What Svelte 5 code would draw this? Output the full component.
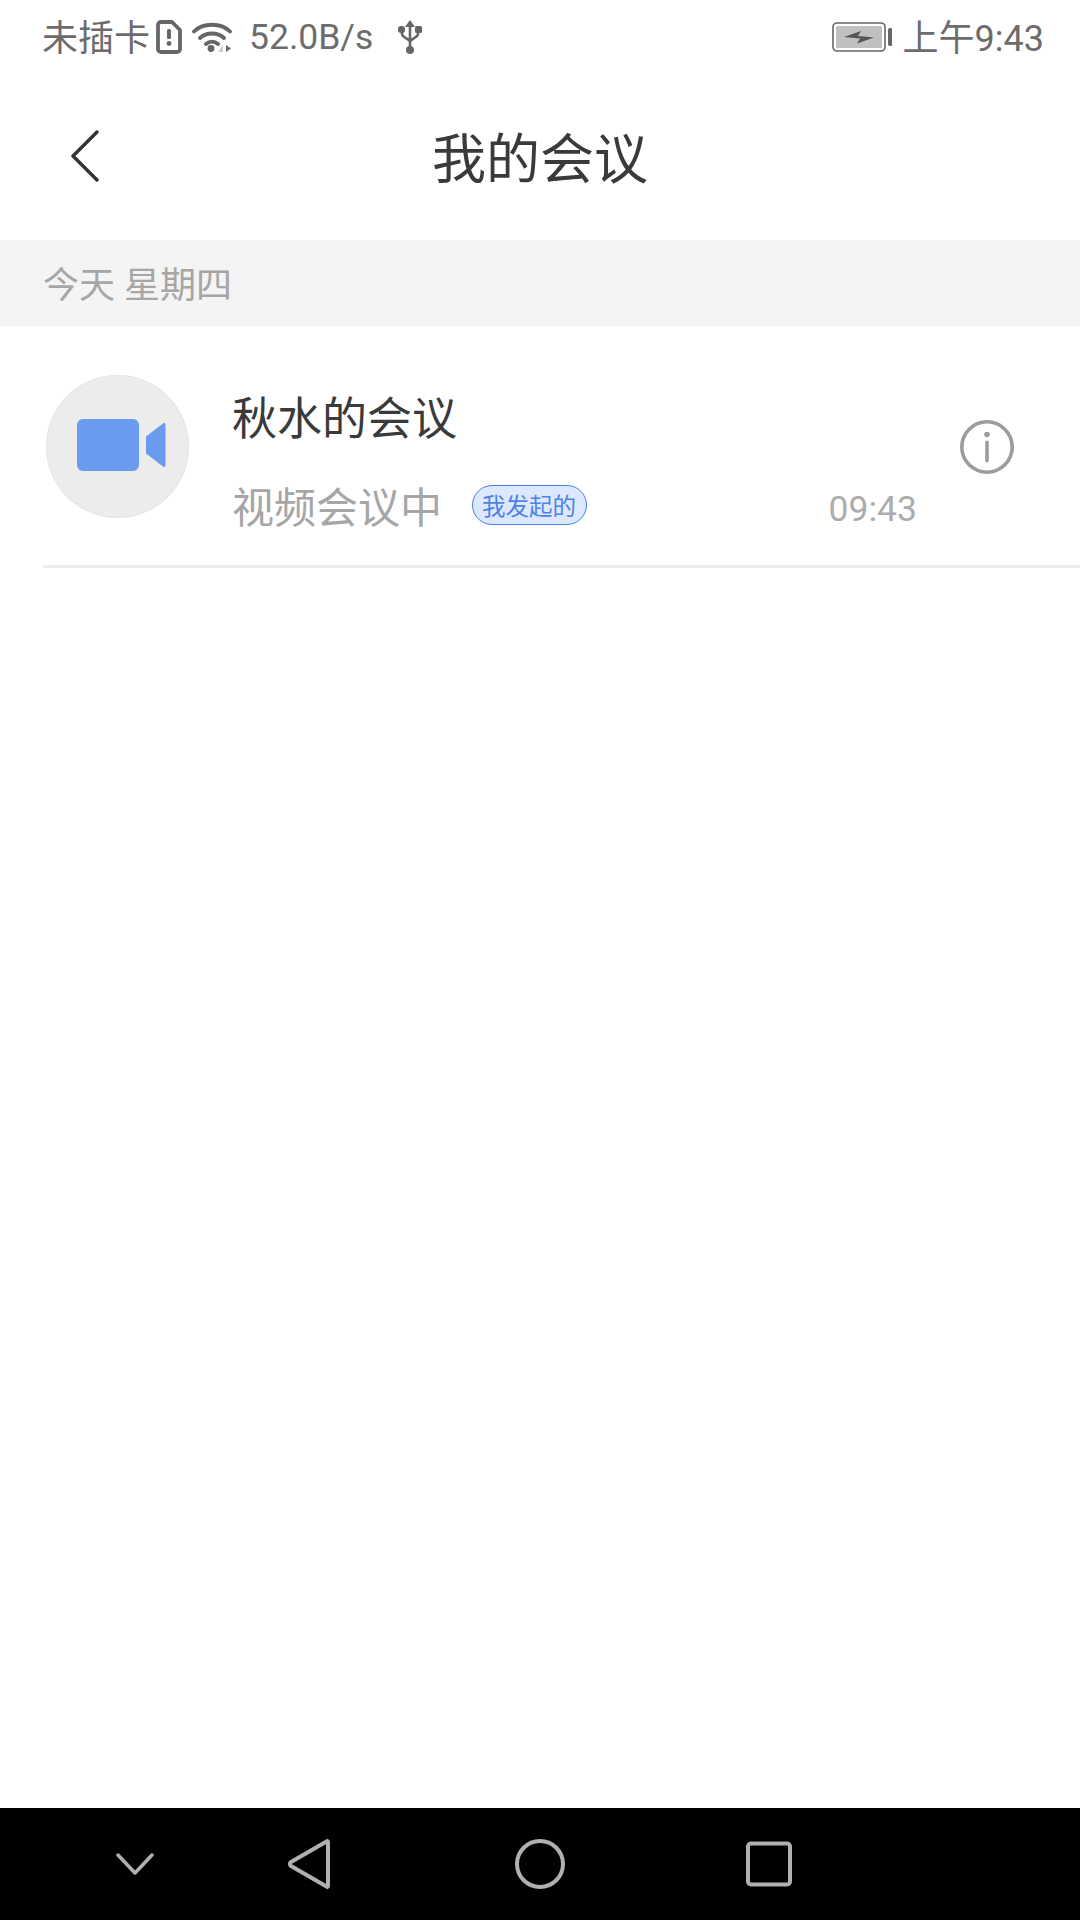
<script>
  let meeting = { title: '秋水的会议', status: '视频会议中', tag: '我发起的', time: '09:43' }
</script>

<div class="page" lang="zh-CN">
  <div class="status">
    <span class="carrier">未插卡</span>
    <svg class="sim" width="26" height="34" viewBox="0 0 26 34">
      <path d="M5 2h11l8 8v19a3 3 0 0 1-3 3H5a3 3 0 0 1-3-3V5a3 3 0 0 1 3-3z" fill="none" stroke="#666" stroke-width="3.8" stroke-linejoin="round" />
      <rect x="11" y="9" width="4" height="10" rx="1.500" fill="#666" />
      <circle cx="13" cy="23.500" r="2.400" fill="#666" />
    </svg>
    <svg class="wifi" width="42" height="32" viewBox="0 0 42 32">
      <path d="M2 10.500C11 1.500 29 1.500 38 10.500M8 17C14.500 11 25.500 11 32 17M14 23C17.500 20 22.500 20 26 23" fill="none" stroke="#666" stroke-width="3.8" stroke-linecap="round" />
      <circle cx="19" cy="27.500" r="3.400" fill="#666" />
      <path d="M31 24v7h-5z" fill="#ccc" />
      <path d="M34 24v7l5-3.500z" fill="#666" />
    </svg>
    <span class="speed">52.0B/s</span>
    <svg class="usb" width="24" height="34" viewBox="0 0 24 34">
      <path d="M12 0l5 7H7z" fill="#666" />
      <path d="M12 5v25M4 10v4c0 3.500 8 5 8 8M20 10v4c0 3.500-8 5-8 8" fill="none" stroke="#666" stroke-width="2.600" />
      <rect x="0" y="6" width="7" height="7" rx="3" fill="#666" />
      <rect x="17" y="6" width="7" height="7" rx="1.500" fill="#666" />
      <circle cx="12" cy="30" r="4" fill="#666" />
    </svg>
    <svg class="battery" width="60" height="30" viewBox="0 0 60 30">
      <rect x="1" y="1" width="52" height="28" rx="4" fill="#fff" stroke="#666" stroke-width="1.600" />
      <rect x="4" y="4" width="46" height="22" rx="1.500" fill="#c0c0c0" />
      <path d="M12 15l17-6-3 5 16 1.500-17 6 3-5z" fill="#555" />
      <rect x="56" y="6" width="4.500" height="18" rx="2" fill="#666" />
    </svg>
    <span class="clock">上午9:43</span>
  </div>

  <header>
    <svg class="back" width="30" height="52" viewBox="0 0 30 52">
      <path d="M27 2L3 26l24 24" fill="none" stroke="#333" stroke-width="3.400" stroke-linecap="round" stroke-linejoin="round" />
    </svg>
    <h1>我的会议</h1>
  </header>

  <div class="section">今天 星期四</div>

  <div class="row">
    <div class="avatar">
      <svg width="90" height="54" viewBox="0 0 90 54">
        <rect x="0" y="1" width="62" height="52" rx="6" fill="#6a9bef" />
        <path d="M69 18.500l17-13c1.500-1 2.500-.5 2.500 1.500v40c0 2-1 2.500-2.500 1.500l-17-13z" fill="#6a9bef" />
      </svg>
    </div>
    <div class="body">
      <div class="title">{meeting.title}</div>
      <div class="sub">
        <span class="state">{meeting.status}</span>
        <span class="tag">{meeting.tag}</span>
        <span class="time">{meeting.time}</span>
      </div>
    </div>
    <svg class="info" width="54" height="54" viewBox="0 0 54 54">
      <circle cx="27" cy="27" r="25.200" fill="none" stroke="#9c9c9c" stroke-width="3.600" />
      <circle cx="27" cy="14.500" r="2.800" fill="#9c9c9c" />
      <rect x="25.200" y="20.500" width="3.600" height="22" rx="1.800" fill="#9c9c9c" />
    </svg>
  </div>

  <div class="spacer"></div>

  <nav>
    <svg width="38" height="22" viewBox="0 0 38 22">
      <path d="M2 2l17 18L36 2" fill="none" stroke="#b0b0b0" stroke-width="3.500" stroke-linecap="round" stroke-linejoin="round" />
    </svg>
    <svg width="44" height="50" viewBox="0 0 44 50">
      <path d="M41 3v44c0 1-.8 1.200-1.500.6L4 27c-1.500-1-1.500-3 0-4L39.500 2.400c.7-.6 1.500-.4 1.500.6z" fill="none" stroke="#b0b0b0" stroke-width="4" stroke-linejoin="round" />
    </svg>
    <svg width="50" height="50" viewBox="0 0 50 50">
      <circle cx="25" cy="25" r="23" fill="none" stroke="#b0b0b0" stroke-width="4" />
    </svg>
    <svg width="46" height="46" viewBox="0 0 46 46">
      <rect x="2" y="2.500" width="42" height="41" rx="3" fill="none" stroke="#b0b0b0" stroke-width="4" />
    </svg>
  </nav>
</div>

<style>
  :global(body) {
    margin: 0;
    background: #fff;
  }

  .page {
    width: 1080px;
    height: 1920px;
    display: flex;
    flex-direction: column;
    font-family: 'Roboto', 'Noto Sans CJK SC', sans-serif;
    overflow: hidden;
  }

  .status {
    height: 74px;
    flex: none;
    display: flex;
    align-items: center;
    padding: 0 36px 0 43px;
    box-sizing: border-box;
    color: #6c6c6c;
  }

  .carrier {
    width: 113px;
    font-size: 36px;
    margin-left: -1px;
    margin-bottom: 4px;
  }

  .sim {
    margin-left: 1px;
  }

  .wifi {
    margin-left: 10px;
  }

  .speed {
    margin-left: 15px;
    font-size: 35.500px;
  }

  .usb {
    margin-left: 25px;
  }

  .battery {
    margin-left: auto;
    margin-right: 11px;
  }

  .clock {
    font-size: 36px;
    margin-bottom: 4px;
  }

  header {
    height: 166px;
    flex: none;
    position: relative;
    display: flex;
    align-items: center;
    justify-content: center;
  }

  .back {
    position: absolute;
    left: 70px;
    top: 56px;
  }

  h1 {
    margin: 0;
    font-size: 54px;
    font-weight: 400;
    color: #3a3a3a;
    position: relative;
    top: -2px;
  }

  .section {
    height: 86px;
    flex: none;
    display: flex;
    align-items: center;
    padding: 0 0 2px 43px;
    box-sizing: border-box;
    background: #f4f4f4;
    color: #a6a6a6;
    font-size: 36px;
  }

  .row {
    height: 242px;
    flex: none;
    margin-left: 43px;
    border-bottom: 3px solid #eee;
    box-sizing: border-box;
    display: flex;
    align-items: flex-start;
    position: relative;
  }

  .avatar {
    width: 143px;
    height: 143px;
    margin-top: 49px;
    margin-left: 3px;
    flex: none;
    border-radius: 50%;
    background: #ececec;
    box-shadow: inset 0 0 0 1px #e6e6e6;
    display: flex;
    align-items: center;
    justify-content: center;
    box-sizing: border-box;
    padding: 0 0 3px 8px;
  }

  .body {
    margin-left: 43px;
    width: 685px;
    flex: none;
  }

  .title {
    margin-top: 64px;
    font-size: 45px;
    line-height: 60px;
    color: #3a3a3a;
  }

  .sub {
    margin-top: 28px;
    display: flex;
    align-items: center;
    height: 52px;
  }

  .state {
    font-size: 42px;
    color: #a6a6a6;
  }

  .tag {
    margin-left: 29.500px;
    width: 115px;
    height: 40px;
    box-sizing: border-box;
    border: 1px solid #4a7fe6;
    border-radius: 20px;
    background: #dce8fd;
    color: #4f82e6;
    font-size: 23.500px;
    display: flex;
    align-items: center;
    justify-content: center;
    position: relative;
    top: 1px;
  }

  .time {
    margin-left: auto;
    font-size: 35.500px;
    color: #acacac;
    position: relative;
    top: 5px;
  }

  .info {
    position: absolute;
    left: 917px;
    top: 94px;
  }

  .spacer {
    flex: 1;
  }

  nav {
    height: 112px;
    flex: none;
    background: #000;
    display: flex;
    align-items: center;
    padding-left: 116px;
    box-sizing: border-box;
  }

  nav svg:nth-child(2) {
    margin-left: 133px;
  }

  nav svg:nth-child(3) {
    margin-left: 184px;
  }

  nav svg:nth-child(4) {
    margin-left: 181px;
  }
</style>
